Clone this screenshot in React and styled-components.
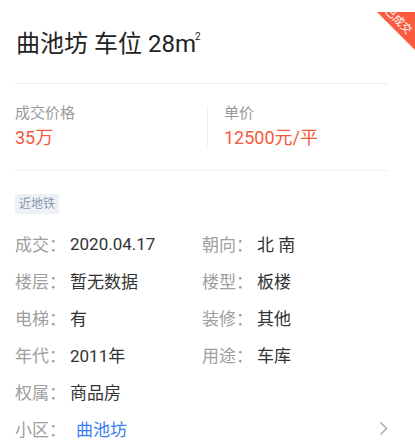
import React from 'react';
import styled, { createGlobalStyle } from 'styled-components';

const GlobalStyle = createGlobalStyle`
  body {
    margin: 0;
    background: #fff;
    font-family: Roboto, "Noto Sans CJK SC", sans-serif;
  }
`;

const Card = styled.div`
  position: relative;
  overflow: hidden;
  margin-top: 12px;
  padding: 0 27px 0 15px;
  background: #fff;
`;

const Corner = styled.div`
  position: absolute;
  top: 0;
  right: 0;
  width: 38px;
  height: 38px;
  background: #fa5b3d;
  clip-path: polygon(0 0, 100% 0, 100% 100%);
`;

const CornerText = styled.span`
  position: absolute;
  top: 2px;
  right: -8px;
  width: 50px;
  height: 14px;
  line-height: 14px;
  text-align: center;
  font-size: 11px;
  color: #fff;
  transform: rotate(45deg);
`;

const Title = styled.h1`
  margin: 0;
  padding: 17px 0 24px 1px;
  font-size: 24px;
  line-height: 30px;
  font-weight: 400;
  color: #222;
  border-bottom: 1px solid #f0f0f0;
`;

const Unit = styled.span`
  letter-spacing: -1px;
`;

const Sup = styled.sup`
  font-size: 10px;
  vertical-align: 12px;
  line-height: 0;
`;

const PriceRow = styled.div`
  display: flex;
  align-items: center;
  padding: 19px 0 20px;
  border-bottom: 1px solid #f0f0f0;
`;

const PriceCol = styled.div`
  width: ${p => p.$width || 'auto'};
  flex: ${p => (p.$width ? 'none' : 1)};
  padding-left: ${p => p.$indent || 0}px;
`;

const Separator = styled.div`
  width: 1px;
  height: 40px;
  background: #f0f0f0;
`;

const PriceLabel = styled.div`
  font-size: 15px;
  line-height: 20px;
  color: #999;
`;

const PriceValue = styled.div`
  margin-top: 3px;
  font-size: 18px;
  line-height: 24px;
  color: #f5593c;
`;

const Tags = styled.div`
  display: flex;
  gap: 6px;
  padding-top: 23px;
`;

const Tag = styled.span`
  padding: 0 4px;
  height: 20px;
  line-height: 20px;
  font-size: 12px;
  color: #8596ab;
  background: #eef2f6;
  border-radius: 2px;
`;

const Details = styled.div`
  display: grid;
  grid-template-columns: 187px 1fr;
  padding-top: 11px;
`;

const Item = styled.div`
  display: flex;
  align-items: center;
  grid-column: ${p => (p.$full ? '1 / -1' : 'auto')};
  height: 37px;
  font-size: 17px;
`;

const Label = styled.span`
  color: #9e9e9e;
  margin-right: 4px;
`;

const Value = styled.span`
  color: #333;
`;

const Link = styled.span`
  margin-left: 6px;
  color: #3b7cf0;
  flex: 1;
`;

const Chevron = () => (
  <svg width="9" height="15" viewBox="0 0 9 15">
    <path d="M1.5 1.5 L7.5 7.5 L1.5 13.5" fill="none" stroke="#a5a5a5" strokeWidth="1.4" />
  </svg>
);

const details = [
  ['成交', '2020.04.17'],
  ['朝向', '北 南'],
  ['楼层', '暂无数据'],
  ['楼型', '板楼'],
  ['电梯', '有'],
  ['装修', '其他'],
  ['年代', '2011年'],
  ['用途', '车库'],
];

export default function App() {
  return (
    <>
      <GlobalStyle />
      <Card>
        <Corner />
        <CornerText>已成交</CornerText>
        <Title>
          曲池坊 车位 28<Unit>m</Unit>
          <Sup>2</Sup>
        </Title>
        <PriceRow>
          <PriceCol $width="192px">
            <PriceLabel>成交价格</PriceLabel>
            <PriceValue>35万</PriceValue>
          </PriceCol>
          <Separator />
          <PriceCol $indent={16}>
            <PriceLabel>单价</PriceLabel>
            <PriceValue>12500元/平</PriceValue>
          </PriceCol>
        </PriceRow>
        <Tags>
          <Tag>近地铁</Tag>
        </Tags>
        <Details>
          {details.map(([k, v]) => (
            <Item key={k}>
              <Label>{k}：</Label>
              <Value>{v}</Value>
            </Item>
          ))}
          <Item $full>
            <Label>权属：</Label>
            <Value>商品房</Value>
          </Item>
          <Item $full>
            <Label>小区：</Label>
            <Link>曲池坊</Link>
            <Chevron />
          </Item>
        </Details>
      </Card>
    </>
  );
}
